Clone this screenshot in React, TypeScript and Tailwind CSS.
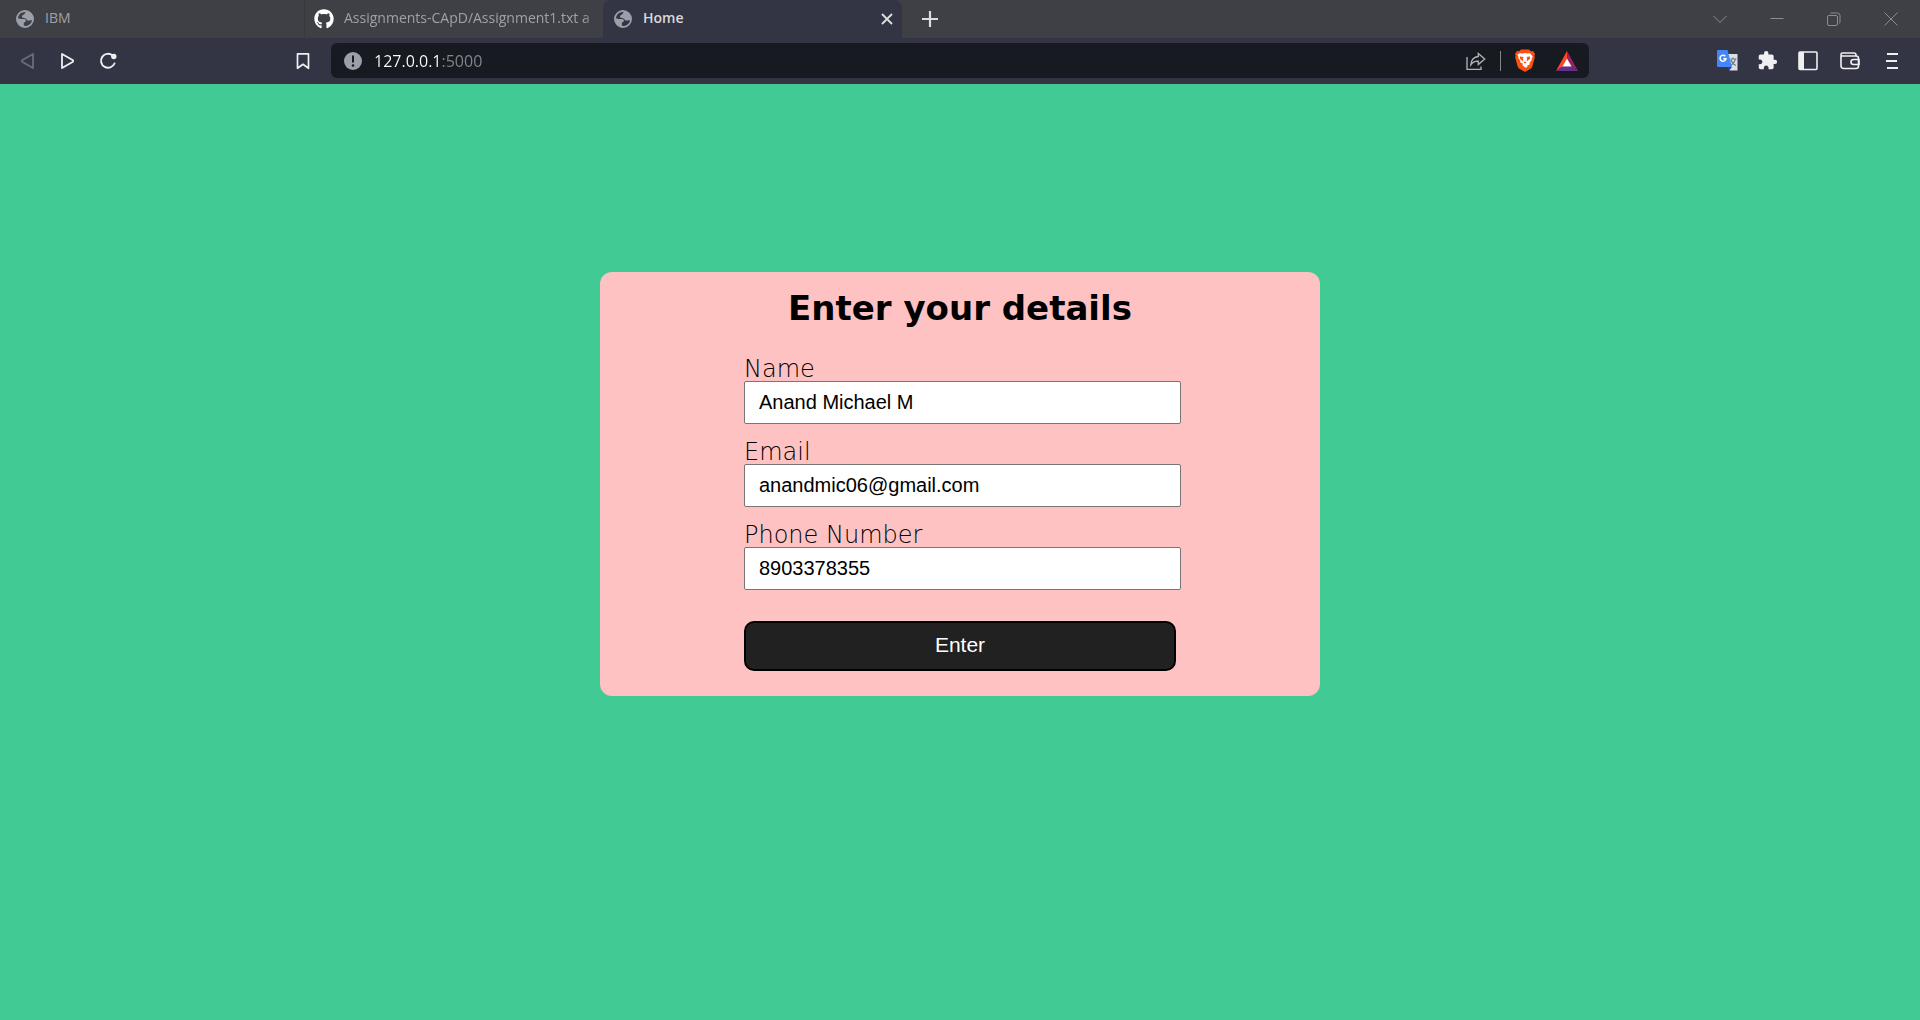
import React from "react";
import { FaGithub } from "react-icons/fa";
import { MdExtension } from "react-icons/md";

const Globe = () => (
  <svg width="18" height="18" viewBox="0 0 18 18" className="shrink-0">
    <path
      fill="#9b9fa8"
      fillRule="evenodd"
      d="M9 0a9 9 0 1 1 0 18A9 9 0 0 1 9 0zM9.800 2C5.500 1.600 2.300 4.600 2 8.200l3 .9h3.300c1.200.3 1.700 1.200 1.500 2.400l-2 1.300v2.400l1.200.8c3.800 0 6.700-2.500 7-6l-2.200.6h-2.600L10 8.800 8.200 8 6 7.600V5.800l2.200-1.600z"
    />
  </svg>
);

const BackIcon = () => (
  <svg width="16" height="18" viewBox="0 0 16 18" fill="none" stroke="#6b6d79" strokeWidth="1.800" strokeLinejoin="round">
    <path d="M13 2v14L2 9.800V8.200z" />
  </svg>
);

const ForwardIcon = () => (
  <svg width="16" height="18" viewBox="0 0 16 18" fill="none" stroke="#f0f0f2" strokeWidth="1.800" strokeLinejoin="round">
    <path d="M2 2v14L13 9.800V8.200z" />
  </svg>
);

const ReloadIcon = () => (
  <svg width="18" height="18" viewBox="0 0 18 18" fill="none" stroke="#f0f0f2" strokeWidth="1.900" strokeLinecap="round">
    <path d="M13.500 3.400A7 7 0 1 0 15.500 11.500" />
    <circle cx="14.800" cy="4.500" r="2.700" fill="#f0f0f2" stroke="none" />
  </svg>
);

const BookmarkIcon = () => (
  <svg width="16" height="18" viewBox="0 0 16 18" fill="none" stroke="#f0f0f2" strokeWidth="1.700" strokeLinejoin="round">
    <path d="M2.500 1.800h11v14.500L8 12.300l-5.500 4z" />
  </svg>
);

const InfoIcon = () => (
  <svg width="18" height="18" viewBox="0 0 18 18" className="shrink-0">
    <circle cx="9" cy="9" r="9" fill="#9b9fa8" />
    <path d="M9 4.200v5.600" stroke="#181a22" strokeWidth="2" strokeLinecap="round" />
    <circle cx="9" cy="13.500" r="1.300" fill="#181a22" />
  </svg>
);

const ShareIcon = () => (
  <svg width="20" height="20" viewBox="0 0 20 20" fill="none" stroke="#b4b5b9" strokeWidth="1.300">
    <path d="M1 6v12.300h14V15.500" />
    <path d="M12.300 2.500 18.700 8l-6.400 5.500v-3.300C9 10 6.700 11 4.800 14c0-5 3.200-8.300 7.500-8.500z" />
  </svg>
);

const BraveIcon = () => (
  <svg width="20" height="23" viewBox="0 0 20 23">
    <path fill="#fb5012" d="M6 .5h8l1.800 1.800L18 2l2 3-.6 1.500.4 2-2.600 9.400-1.200 1.600L10 23l-6-3.500-1.200-1.600L.2 8.500l.4-2L0 5l2-3 2.200.3z" />
    <path fill="#fff" d="M5 4.200 7.500 4.600l2.500-.5 2.500.5 2.500-.4 2.700 3.200-1 1.900.2 1.500-2.300 3 .3 1.500-1.200.8-1 .2-.5.700.4 1L10 18.500l-2.600-2.500.4-1-.5-.7-1-.2-1.200-.8.300-1.500-2.300-3 .2-1.500-1-1.900z" />
    <path fill="#fb5012" d="M5 7.400 8.500 8 7.800 9.200 8.300 12l-1-.2-2.300-2zM15 7.400 11.500 8l.7 1.200-.5 2.800 1-.2 2.300-2zM8.300 13.300l1.700-.6 1.700.6-1.700 1.200z" />
  </svg>
);

const RewardsIcon = () => (
  <svg width="22" height="20" viewBox="0 0 22 20">
    <path fill="#ff4724" d="M11 0 0 20l6.500-4.500L11 7.500z" />
    <path fill="#9e1f63" d="M11 0v7.500l4.500 8L22 20z" />
    <path fill="#662d91" d="M0 20h22l-6.500-4.800h-9z" />
    <path fill="#fff" d="m11 7.500-4.600 8h9.200z" />
  </svg>
);

const TranslateIcon = () => (
  <svg width="21" height="21" viewBox="0 0 21 21">
    <path fill="#dcdfe2" d="M9 4h11.500v16.500h-8z" />
    <path d="M13 9h6.500M16 7.500V9m2.300 0c-.5 3-2.300 5-5 6.500M14 10c.8 2.500 2.500 4.300 4.800 5.500" stroke="#607988" strokeWidth="1.200" fill="none" />
    <path fill="#3333b8" d="M10 17h5l-3 3.500z" />
    <path fill="#4386f5" d="M1 0h9.500L15 17H1a1 1 0 0 1-1-1V1a1 1 0 0 1 1-1z" />
    <path d="M8.300 6.200A3 3 0 1 0 9 8.700H6.300" stroke="#fff" strokeWidth="1.500" fill="none" />
  </svg>
);

const SidebarIcon = () => (
  <svg width="20" height="20" viewBox="0 0 20 20">
    <rect x="1" y="1" width="18" height="17.500" rx="1" fill="none" stroke="#f0f0f2" strokeWidth="1.600" />
    <path fill="#f0f0f2" d="M1 1h5v17.500H1z" />
  </svg>
);

const WalletIcon = () => (
  <svg width="20" height="18" viewBox="0 0 20 18" fill="none" stroke="#f0f0f2" strokeWidth="1.600" strokeLinejoin="round">
    <path d="M1 3.500V14a2.500 2.500 0 0 0 2.500 2.500H16a2.500 2.500 0 0 0 2.500-2.500V6.500A2.500 2.500 0 0 0 16 4H2.500A1.500 1.500 0 0 1 2.500 1H14a2 2 0 0 1 2 2v1" />
    <path d="M19 7.500h-5.500a2.500 2.500 0 0 0 0 5H19z" />
  </svg>
);

const MenuIcon = () => (
  <svg width="12" height="18" viewBox="0 0 12 18" stroke="#f0f0f2" strokeWidth="1.900">
    <path d="M1 2h11M0 9h11M1 16h11" />
  </svg>
);

function IconButton({ label, children, className = "w-10" }: { label: string; children: React.ReactNode; className?: string }) {
  return (
    <button type="button" aria-label={label} className={"flex h-8 shrink-0 items-center justify-center " + className}>
      {children}
    </button>
  );
}

function WindowButton({ label, d }: { label: string; d: string }) {
  return (
    <button type="button" aria-label={label} className="flex h-full w-[57px] items-center justify-center">
      <svg width="14" height="14" viewBox="0 0 14 14" fill="none" stroke="#8c8c91" strokeWidth="1">
        <path d={d} />
      </svg>
    </button>
  );
}

function TabBar() {
  return (
    <div className="flex h-[38px] items-stretch bg-[#3f3f46] text-[14px] leading-5 text-[#a0a1a6]">
      <div role="tablist" className="flex min-w-0">
        <button type="button" role="tab" aria-selected="false" className="flex w-[305px] items-center gap-[11px] border-r border-[#38383d] pl-4">
          <Globe />
          <span className="pb-0.5">IBM</span>
        </button>
        <button type="button" role="tab" aria-selected="false" className="flex w-[298px] items-center gap-[10px] pr-1 pl-[9px]">
          <FaGithub size={20} color="#fff" className="shrink-0" />
          <span className="min-w-0 flex-1 overflow-hidden mask-r-from-94% pb-0.5 text-left whitespace-nowrap">
            Assignments-CApD/Assignment1.txt a
          </span>
        </button>
        <div className="flex w-[299px] items-center rounded-t-lg bg-[#333544] pr-[7px] pl-[11px]">
          <button type="button" role="tab" aria-selected="true" className="flex flex-1 items-center gap-[11px] font-semibold text-[#d8d9dd]">
            <Globe />
            <span className="pb-0.5">Home</span>
          </button>
          <button type="button" aria-label="Close tab" className="flex size-4 items-center justify-center">
            <svg width="12" height="12" viewBox="0 0 12 12" stroke="#dcdde0" strokeWidth="1.900">
              <path d="m1 1 10 10M11 1 1 11" />
            </svg>
          </button>
        </div>
      </div>
      <button type="button" aria-label="New tab" className="flex w-14 items-center justify-center">
        <svg width="16" height="16" viewBox="0 0 16 16" stroke="#dcdde0" strokeWidth="2.200">
          <path d="M8 0v16M0 8h16" />
        </svg>
      </button>
      <div className="mr-px ml-auto flex">
        <WindowButton label="Search tabs" d="m.5 4 6.500 6.500L13.500 4" />
        <WindowButton label="Minimize" d="M.5 6.500h13" />
        <WindowButton label="Restore" d="M2 3.500h7a1.500 1.500 0 0 1 1.500 1.500v7a1.500 1.500 0 0 1-1.500 1.500H2A1.500 1.500 0 0 1 .5 12V5A1.500 1.500 0 0 1 2 3.500zM3 1.500A2 2 0 0 1 4 1h6.500a2.500 2.500 0 0 1 2.500 2.500V10a2 2 0 0 1-1 1.500" />
        <WindowButton label="Close" d="m.5.5 13 13M13.500.5l-13 13" />
      </div>
    </div>
  );
}

function Toolbar() {
  return (
    <div className="flex h-[46px] items-center bg-[#333544] pb-px">
      <div className="flex w-[331px] items-center pr-2 pl-2">
        <IconButton label="Back"><BackIcon /></IconButton>
        <IconButton label="Forward"><ForwardIcon /></IconButton>
        <IconButton label="Reload"><ReloadIcon /></IconButton>
        <IconButton label="Bookmark this page" className="ml-auto w-10"><BookmarkIcon /></IconButton>
      </div>
      <div className="flex h-[35px] min-w-0 flex-1 items-center rounded-md bg-[#181a22] pl-[13px]">
        <InfoIcon />
        <input
          aria-label="Address"
          defaultValue="127.0.0.1:5000"
          className="ml-3 min-w-0 flex-1 bg-[linear-gradient(90deg,#fff_68px,#85878d_68px)] bg-clip-text text-[16px] text-transparent caret-white outline-none"
        />
        <IconButton label="Share"><ShareIcon /></IconButton>
        <span className="mx-1 h-5 w-px bg-[#85868b]" />
        <IconButton label="Brave Shields"><BraveIcon /></IconButton>
        <IconButton label="Brave Rewards" className="w-11"><RewardsIcon /></IconButton>
      </div>
      <div className="flex w-[331px] justify-end pr-[7px]">
        <IconButton label="Translate"><TranslateIcon /></IconButton>
        <IconButton label="Extensions"><MdExtension size={21} color="#f0f0f2" /></IconButton>
        <IconButton label="Sidebar" className="w-[42px]"><SidebarIcon /></IconButton>
        <IconButton label="Wallet" className="w-[42px]"><WalletIcon /></IconButton>
        <IconButton label="Menu" className="w-[42px]"><MenuIcon /></IconButton>
      </div>
    </div>
  );
}

const fields = [
  { id: "name", label: "Name", type: "text", value: "Anand Michael M" },
  { id: "email", label: "Email", type: "email", value: "anandmic06@gmail.com" },
  { id: "phone", label: "Phone Number", type: "tel", value: "8903378355" },
];

export default function App() {
  return (
    <div className="flex min-h-screen flex-col bg-[#42ca95]">
      <header className="font-['Open_Sans',sans-serif]">
        <TabBar />
        <Toolbar />
      </header>
      <main className="flex flex-1 flex-col items-center pt-47 text-black">
        <section className="flex w-[720px] max-w-full flex-col items-center rounded-xl bg-[#ffc2c2] pt-3 pb-[25px]">
          <h1 className="mb-[25px] font-['DejaVu_Sans',sans-serif] text-[34px] leading-[48px] font-bold whitespace-nowrap">
            Enter your details
          </h1>
          <form className="flex w-3/5 flex-col" onSubmit={(e) => e.preventDefault()}>
            <div className="flex flex-col gap-4">
              {fields.map((f) => (
                <div key={f.id} className="flex flex-col">
                  <label htmlFor={f.id} className="font-['DejaVu_Sans',sans-serif] text-[24px] leading-6 font-extralight">
                    {f.label}
                  </label>
                  <input
                    id={f.id}
                    type={f.type}
                    defaultValue={f.value}
                    className="h-[43px] w-[calc(100%+5px)] rounded-xs border border-[#767676] bg-white px-[14px] font-['Liberation_Sans',sans-serif] text-[20px]"
                  />
                </div>
              ))}
            </div>
            <button
              type="submit"
              className="mt-[31px] h-[50px] rounded-[10px] border-2 border-black bg-[#212121] pb-0.5 font-['Liberation_Sans',sans-serif] text-[21px] text-white"
            >
              Enter
            </button>
          </form>
        </section>
      </main>
    </div>
  );
}
